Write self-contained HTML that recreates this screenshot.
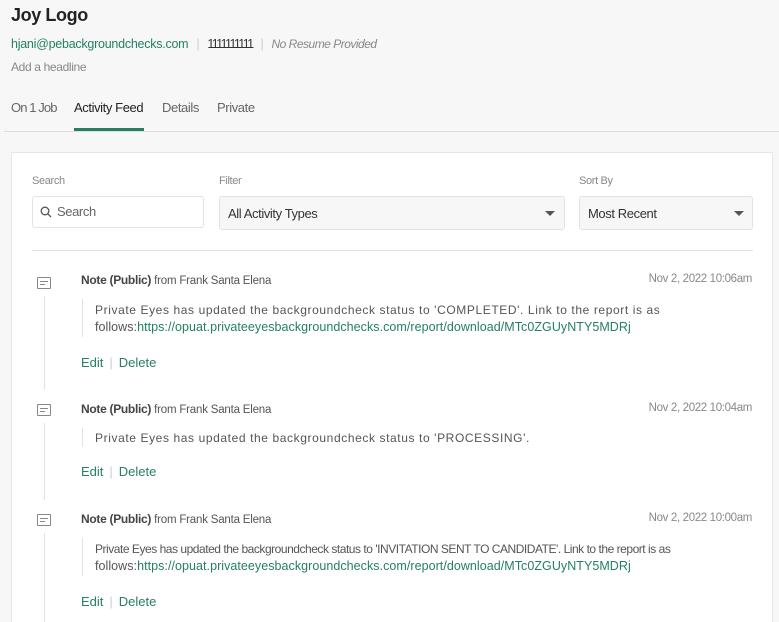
<!DOCTYPE html>
<html><head><meta charset="utf-8"><style>
*{margin:0;padding:0;box-sizing:border-box}
html,body{width:779px;height:622px;overflow:hidden}
body{background:#f7f7f7;font-family:"Liberation Sans",sans-serif;color:#333;position:relative}
.a{position:absolute;white-space:nowrap}
.g{color:#25805f}
.m{color:#888}
.s12{font-size:12px;letter-spacing:-0.35px}
.s13{font-size:13px;letter-spacing:-0.4px}
.box{position:absolute;border:1px solid #e2e2e2;border-radius:3px}
.caret{position:absolute;width:0;height:0;border-left:5px solid transparent;border-right:5px solid transparent;border-top:5px solid #555}
.ico{position:absolute;width:14px;height:12px;border:1.5px solid #888;border-radius:1px}
.ico:before{content:"";position:absolute;left:2px;top:3px;width:8px;height:1.2px;background:#888}
.ico:after{content:"";position:absolute;left:2px;top:6px;width:5px;height:1.2px;background:#888}
.vl{position:absolute;width:1px;background:#e2e2e2;left:44px}
.bl{position:absolute;width:1px;background:#e2e2e2;left:82px}
.sep{color:#ccc;margin:0 8px}
.b1{font-size:12px;letter-spacing:0.6px;color:#555}
.b2{font-size:12.5px;letter-spacing:0.05px;color:#555}
.ed{font-size:13px;letter-spacing:0}
.ed .sep{margin:0 6px}
.hd{font-size:12px;letter-spacing:-0.3px}
.hd span{color:#555;font-size:11.5px;letter-spacing:-0.2px}
</style></head><body>
<div class="a" style="left:11px;top:5px;font-size:18px;font-weight:bold;color:#222;letter-spacing:-0.4px">Joy Logo</div>
<div class="a" style="left:11px;top:37px;font-size:12.5px;letter-spacing:-0.25px"><span class="g">hjani@pebackgroundchecks.com</span><span class="sep" style="margin:0 8px">|</span><span style="letter-spacing:-1.6px">1111111111</span><span class="sep">|</span><i class="m" style="font-size:12px;letter-spacing:-0.5px">No Resume Provided</i></div>
<div class="a s12 m" style="left:11px;top:60px">Add a headline</div>
<div class="a s13" style="left:11px;top:100px;color:#666;letter-spacing:-0.9px">On 1 Job</div>
<div class="a s13" style="left:74px;top:100px;color:#222">Activity Feed</div>
<div class="a s13" style="left:162px;top:100px;color:#666">Details</div>
<div class="a s13" style="left:217px;top:100px;color:#666">Private</div>
<div class="a" style="left:74px;top:128px;width:70px;height:3px;background:#2a7d63"></div>
<div class="a" style="left:4px;top:131px;width:775px;height:1px;background:#ddd"></div>
<div class="a" style="left:11px;top:152px;width:762px;height:470px;background:#fff;border:1px solid #e6e6e6;border-bottom:none"></div>

<div class="a s12 m" style="left:32px;top:175px;font-size:11px">Search</div>
<div class="a s12 m" style="left:219px;top:175px;font-size:11px">Filter</div>
<div class="a s12 m" style="left:579px;top:175px;font-size:11px">Sort By</div>
<div class="box" style="left:32px;top:196px;width:172px;height:32px;background:#fff"></div>
<svg class="a" style="left:40px;top:206px" width="12" height="12" viewBox="0 0 12 12"><circle cx="5" cy="5" r="3.8" fill="none" stroke="#555" stroke-width="1.3"/><line x1="7.8" y1="7.8" x2="11" y2="11" stroke="#555" stroke-width="1.3"/></svg>
<div class="a s13" style="left:57px;top:204px;color:#666">Search</div>
<div class="box" style="left:219px;top:196px;width:346px;height:34px;background:#f7f7f7"></div>
<div class="a s13" style="left:228px;top:206px;color:#333">All Activity Types</div>
<div class="caret" style="left:545px;top:211px"></div>
<div class="box" style="left:579px;top:196px;width:174px;height:34px;background:#f7f7f7"></div>
<div class="a s13" style="left:588px;top:206px;color:#333">Most Recent</div>
<div class="caret" style="left:734px;top:211px"></div>
<div class="a" style="left:32px;top:250px;width:721px;height:1px;background:#e2e2e2"></div>

<!-- entry 1 -->
<div class="ico" style="left:37px;top:277px"></div>
<div class="vl" style="top:296px;height:94px"></div>
<div class="a hd" style="left:81px;top:273px"><b style="color:#444">Note (Public)</b> <span>from Frank Santa Elena</span></div>
<div class="a s12 m" style="right:27px;top:273px;font-size:11.5px">Nov 2, 2022 10:06am</div>
<div class="bl" style="top:299px;height:38px"></div>
<div class="a b1" style="left:95px;top:303px">Private Eyes has updated the backgroundcheck status to 'COMPLETED'. Link to the report is as</div>
<div class="a b2" style="left:95px;top:320px">follows:<span class="g">https://opuat.privateeyesbackgroundchecks.com/report/download/MTc0ZGUyNTY5MDRj</span></div>
<div class="a ed g" style="left:81px;top:355px">Edit<span class="sep">|</span>Delete</div>

<!-- entry 2 -->
<div class="ico" style="left:37px;top:404px"></div>
<div class="vl" style="top:423px;height:77px"></div>
<div class="a hd" style="left:81px;top:402px"><b style="color:#444">Note (Public)</b> <span>from Frank Santa Elena</span></div>
<div class="a s12 m" style="right:27px;top:402px;font-size:11.5px">Nov 2, 2022 10:04am</div>
<div class="bl" style="top:428px;height:19px"></div>
<div class="a b1" style="left:95px;top:431px">Private Eyes has updated the backgroundcheck status to 'PROCESSING'.</div>
<div class="a ed g" style="left:81px;top:464px">Edit<span class="sep">|</span>Delete</div>

<!-- entry 3 -->
<div class="ico" style="left:37px;top:514px"></div>
<div class="vl" style="top:533px;height:89px"></div>
<div class="a hd" style="left:81px;top:512px"><b style="color:#444">Note (Public)</b> <span>from Frank Santa Elena</span></div>
<div class="a s12 m" style="right:27px;top:512px;font-size:11.5px">Nov 2, 2022 10:00am</div>
<div class="bl" style="top:538px;height:38px"></div>
<div class="a b1" style="left:95px;top:542px;letter-spacing:-0.47px">Private Eyes has updated the backgroundcheck status to 'INVITATION SENT TO CANDIDATE'. Link to the report is as</div>
<div class="a b2" style="left:95px;top:559px">follows:<span class="g">https://opuat.privateeyesbackgroundchecks.com/report/download/MTc0ZGUyNTY5MDRj</span></div>
<div class="a ed g" style="left:81px;top:594px">Edit<span class="sep">|</span>Delete</div>
</body></html>
